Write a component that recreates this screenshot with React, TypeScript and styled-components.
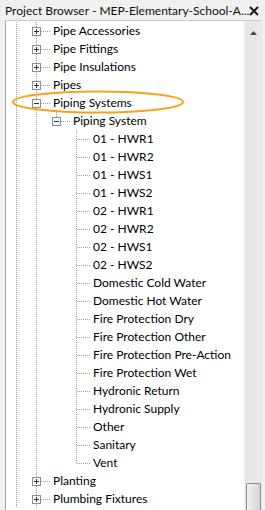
import styled, { createGlobalStyle } from 'styled-components';

type Expander = 'plus' | 'minus' | null;

type Node = {
  label: string;
  level: number;
  expander: Expander;
  last?: boolean;
  guides: boolean[];
};

const systems = [
  '01 - HWR1',
  '01 - HWR2',
  '01 - HWS1',
  '01 - HWS2',
  '02 - HWR1',
  '02 - HWR2',
  '02 - HWS1',
  '02 - HWS2',
  'Domestic Cold Water',
  'Domestic Hot Water',
  'Fire Protection Dry',
  'Fire Protection Other',
  'Fire Protection Pre-Action',
  'Fire Protection Wet',
  'Hydronic Return',
  'Hydronic Supply',
  'Other',
  'Sanitary',
  'Vent',
];

const category = (label: string, expander: Expander = 'plus'): Node => ({
  label,
  level: 1,
  expander,
  guides: [true],
});

const rows: Node[] = [
  category('Pipe Accessories'),
  category('Pipe Fittings'),
  category('Pipe Insulations'),
  category('Pipes'),
  category('Piping Systems', 'minus'),
  { label: 'Piping System', level: 2, expander: 'minus', last: true, guides: [true, true] },
  ...systems.map((label, i) => ({
    label,
    level: 3,
    expander: null,
    last: i === systems.length - 1,
    guides: [true, true, false],
  })),
  category('Planting'),
  category('Plumbing Fixtures'),
];

const LINE = '#a0a0a0';

const GlobalStyle = createGlobalStyle`
  html, body {
    margin: 0;
    padding: 0;
    background: #f0f0f0;
  }
  body {
    font-family: Lato, "Noto Sans", "Liberation Sans", sans-serif;
  }
`;

const Window = styled.div`
  position: relative;
  width: 265px;
  height: 510px;
  display: flex;
  flex-direction: column;
  background: #f0f0f0;
  overflow: hidden;
`;

const TitleBar = styled.div`
  height: 20px;
  display: flex;
  align-items: center;
  justify-content: space-between;
  padding: 0 6px 0 5px;
  font-size: 12px;
  color: #111;
  white-space: nowrap;
`;

const CloseButton = styled.span`
  display: flex;
  align-items: center;
  margin-top: 2px;
`;

const Panel = styled.div`
  flex: 1;
  min-height: 0;
  display: flex;
  margin: 0 3px 0 5px;
  border-left: 1px solid #a5a5a5;
  border-top: 1px solid #c8c8c8;
  background: #fff;
`;

const Tree = styled.div`
  flex: 1;
  min-width: 0;
  padding-top: 1px;
  padding-left: 1px;
  overflow: hidden;
`;

const Row = styled.div`
  height: 18px;
  display: flex;
  align-items: center;
`;

const Guide = styled.span<{ $on: boolean }>`
  width: 20px;
  height: 18px;
  flex-shrink: 0;
  background-image: ${({ $on }) =>
    $on ? `linear-gradient(to bottom, ${LINE} 50%, transparent 50%)` : 'none'};
  background-size: 1px 2px;
  background-repeat: repeat-y;
  background-position: 9px 0;
`;

const Label = styled.span`
  padding-left: 2px;
  font-size: 12px;
  line-height: 18px;
  color: #000;
  white-space: nowrap;
`;

const Scrollbar = styled.div`
  width: 17px;
  flex-shrink: 0;
  display: flex;
  flex-direction: column;
  justify-content: space-between;
  background: #e8e8e8;
  border-left: 1px solid #ececec;
`;

const ArrowButton = styled.div`
  height: 20px;
  display: flex;
  align-items: center;
  justify-content: center;
  padding-top: 2px;
`;

const Thumb = styled.div`
  height: 26px;
  margin: 0 1px;
  border: 1px solid #8e8f8f;
  border-bottom: none;
  border-radius: 2px 2px 0 0;
  background: linear-gradient(to right, #f3f3f3, #e4e4e4 50%, #d4d4d4);
`;

const Highlight = styled.svg`
  position: absolute;
  left: 0;
  top: 0;
  pointer-events: none;
`;

const Connector = ({ expander, last }: { expander: Expander; last?: boolean }) => (
  <svg width={24} height={18} style={{ flexShrink: 0 }} shapeRendering="crispEdges">
    <line
      x1={9.5}
      y1={0}
      x2={9.5}
      y2={last ? 10 : 18}
      stroke={LINE}
      strokeDasharray="1 1"
    />
    <line
      x1={expander ? 14 : 10}
      y1={9.5}
      x2={23}
      y2={9.5}
      stroke={LINE}
      strokeDasharray="1 1"
    />
    {expander && (
      <g>
        <rect x={5.5} y={5.5} width={8} height={8} fill="#f7f7f7" stroke="#8f8f8f" />
        <line x1={7} y1={9.5} x2={12} y2={9.5} stroke="#2b3a55" />
        {expander === 'plus' && (
          <line x1={9.5} y1={7} x2={9.5} y2={12} stroke="#2b3a55" />
        )}
      </g>
    )}
  </svg>
);

export default function App() {
  return (
    <>
      <GlobalStyle />
      <Window>
        <TitleBar>
          <span>Project Browser - MEP-Elementary-School-A...</span>
          <CloseButton>
            <svg width={10} height={10} viewBox="0 0 10 10">
              <path d="M1 1 L9 9 M9 1 L1 9" stroke="#1a1a1a" strokeWidth={2} />
            </svg>
          </CloseButton>
        </TitleBar>
        <Panel>
          <Tree>
            {rows.map((row, i) => (
              <Row key={i}>
                {row.guides.map((on, g) => (
                  <Guide key={g} $on={on} />
                ))}
                <Connector expander={row.expander} last={row.last} />
                <Label>{row.label}</Label>
              </Row>
            ))}
          </Tree>
          <Scrollbar>
            <ArrowButton>
              <svg width={7} height={4} viewBox="0 0 7 4">
                <path d="M0 4 L3.5 0 L7 4 Z" fill="#4a4a4a" />
              </svg>
            </ArrowButton>
            <Thumb />
          </Scrollbar>
        </Panel>
        <Highlight width={265} height={510}>
          <ellipse cx={98} cy={102} rx={85} ry={10.5} fill="none" stroke="#f7a21b" strokeWidth={2} />
        </Highlight>
      </Window>
    </>
  );
}
